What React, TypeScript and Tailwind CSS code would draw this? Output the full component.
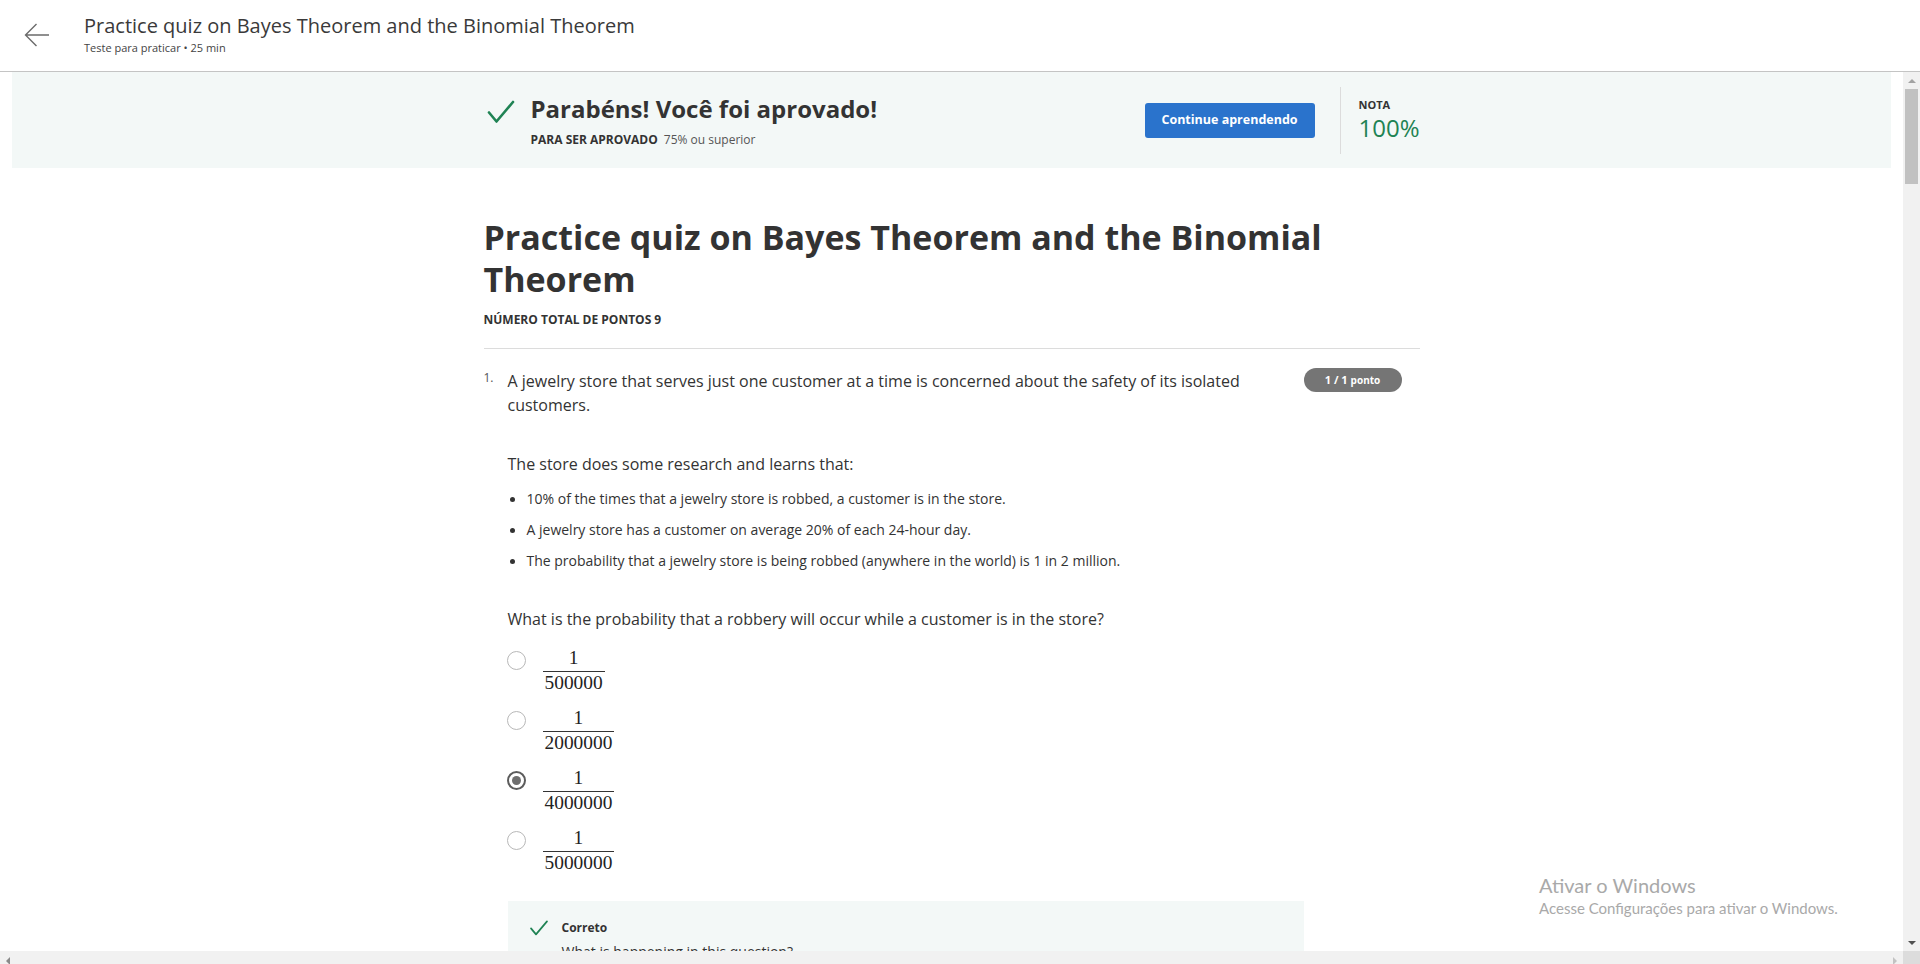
import React from "react";

const options = [
  { den: "500000", checked: false },
  { den: "2000000", checked: false },
  { den: "4000000", checked: true },
  { den: "5000000", checked: false },
];

const facts = [
  "10% of the times that a jewelry store is robbed, a customer is in the store.",
  "A jewelry store has a customer on average 20% of each 24-hour day.",
  "The probability that a jewelry store is being robbed (anywhere in the world) is 1 in 2 million.",
];

function Check({ className }: { className?: string }) {
  return (
    <svg viewBox="0 0 28 24" className={className} fill="none">
      <path d="M2 12.5 L9.5 21.5 L26 2" stroke="#1f8354" strokeWidth="2.6" strokeLinecap="round" strokeLinejoin="round" />
    </svg>
  );
}

function Radio({ checked }: { checked: boolean }) {
  if (checked) {
    return (
      <span className="flex h-[19px] w-[19px] items-center justify-center rounded-full border-2 border-[#5c5c5c]">
        <span className="h-[9px] w-[9px] rounded-full bg-[#6e6e6e]" />
      </span>
    );
  }
  return <span className="block h-[19px] w-[19px] rounded-full border-[1.5px] border-[#b8b8b8]" />;
}

function Fraction({ den }: { den: string }) {
  return (
    <span className="flex flex-col items-center font-['Liberation_Serif',serif] text-[19.4px] text-[#222]">
      <span className="block h-[20px] leading-[20px]">1</span>
      <span className="mt-[3px] block h-px w-full bg-[#333]" />
      <span className="mt-px block h-[20px] px-[2px] leading-[20px]">{den}</span>
    </span>
  );
}

export default function App() {
  return (
    <div className="relative flex h-[964px] w-[1920px] flex-col overflow-hidden bg-white font-['Open_Sans',sans-serif] text-[#333]">
      {/* top bar */}
      <header className="flex h-[72px] shrink-0 items-start border-b border-[#c4c4c4]">
        <div className="w-[84px] pl-[24px] pt-[23px]">
          <svg viewBox="0 0 26 24" className="h-[24px] w-[26px]" fill="none">
            <path d="M25 12 H1.5 M12.5 1 L1.5 12 L12.5 23" stroke="#6b6b6b" strokeWidth="1.4" />
          </svg>
        </div>
        <div className="pt-[12px]">
          <div className="text-[20px] leading-[28px] text-[#3a3a3a]">
            Practice quiz on Bayes Theorem and the Binomial Theorem
          </div>
          <div className="mt-px text-[11px] leading-[14px] text-[#444]">Teste para praticar • 25 min</div>
        </div>
      </header>

      <div className="flex min-h-0 flex-1">
        <main className="min-w-0 flex-1 overflow-hidden">
          {/* result banner */}
          <div className="mx-3 h-[96px] bg-[#f3f8f7]">
            <div className="mx-auto flex h-full max-w-[936px] items-center justify-between">
              <div className="flex items-start pl-[3px]">
                <Check className="mt-[7px] h-[24px] w-[28px]" />
                <div className="ml-[16px]">
                  <h2 className="text-[24px] font-bold leading-[32px] text-[#333]">Parabéns! Você foi aprovado!</h2>
                  <p className="mt-[6px] text-[12px] leading-[17px]">
                    <span className="font-bold">PARA SER APROVADO</span>
                    <span className="ml-[6px] text-[#555]">75% ou superior</span>
                  </p>
                </div>
              </div>
              <div className="flex items-center">
                <button className="h-[35px] w-[170px] rounded-[3px] bg-[#2a73cc] text-[12.5px] font-bold text-white">
                  Continue aprendendo
                </button>
                <div className="ml-[25px] h-[67px] w-px bg-[#dcdcdc]" />
                <div className="ml-[18px] w-[61px]">
                  <div className="text-[11px] font-bold leading-[16px] text-[#333]">NOTA</div>
                  <div className="text-[24px] leading-[30px] text-[#1f8354]">100%</div>
                </div>
              </div>
            </div>
          </div>

          {/* quiz body */}
          <div className="mx-auto max-w-[936px] pt-[48px]">
            <h1 className="text-[34px] font-bold leading-[42px] text-[#333]">
              Practice quiz on Bayes Theorem and the Binomial Theorem
            </h1>
            <p className="mt-[12px] text-[12px] font-bold leading-[16px] text-[#333]">NÚMERO TOTAL DE PONTOS 9</p>
            <hr className="mt-[20px] border-t border-[#dcdcdc]" />

            <div className="mt-[19px] flex items-start">
              <div className="w-[24px] pt-px text-[12px] leading-[18px] text-[#555]">1.</div>
              <div className="w-[796px] pt-px">
                <p className="text-[16px] leading-[24px]">
                  A jewelry store that serves just one customer at a time is concerned about the safety of its isolated
                  customers.
                </p>
                <p className="mt-[35px] text-[16px] leading-[24px]">The store does some research and learns that:</p>
                <ul className="mt-[13px] flex flex-col gap-[11px]">
                  {facts.map((f) => (
                    <li key={f} className="flex items-center text-[14px] leading-[20px]">
                      <span className="ml-[2px] h-[5px] w-[5px] rounded-full bg-[#333]" />
                      <span className="ml-[12px]">{f}</span>
                    </li>
                  ))}
                </ul>
                <p className="mt-[36px] text-[16px] leading-[24px]">
                  What is the probability that a robbery will occur while a customer is in the store?
                </p>
                <div className="mt-[17px] flex flex-col gap-[15px]">
                  {options.map((o) => (
                    <label key={o.den} className="flex items-start">
                      <span className="-ml-px mt-[3px] block">
                        <Radio checked={o.checked} />
                      </span>
                      <span className="ml-[17px] flex">
                        <Fraction den={o.den} />
                      </span>
                    </label>
                  ))}
                </div>

                <div className="mt-[28px] bg-[#f3f8f7] pb-[40px] pl-[20px] pt-[19px]">
                  <div className="flex items-center">
                    <Check className="h-[16px] w-[22px]" />
                    <span className="ml-[12px] text-[12px] font-bold leading-[16px]">Correto</span>
                  </div>
                  <p className="ml-[34px] mt-[6px] text-[14px] leading-[20px]">What is happening in this question?</p>
                </div>
              </div>
              <div className="flex h-[24px] w-[98px] shrink-0 items-center justify-center rounded-full bg-[#757575] text-white">
                <span className="text-[11px] font-bold">1 / 1</span>
                <span className="ml-[3px] text-[10px] font-bold">ponto</span>
              </div>
            </div>
          </div>
        </main>

        {/* vertical scrollbar */}
        <div className="flex w-[17px] shrink-0 flex-col bg-[#f1f1f1]">
          <div className="flex h-[17px] items-center justify-center">
            <svg viewBox="0 0 8 4" className="h-[4px] w-[8px]">
              <path d="M0 4 L4 0 L8 4 Z" fill="#a3a3a3" />
            </svg>
          </div>
          <div className="mx-[2px] h-[95px] bg-[#c1c1c1]" />
          <div className="flex-1" />
          <div className="flex h-[17px] items-center justify-center">
            <svg viewBox="0 0 8 4" className="h-[4px] w-[8px]">
              <path d="M0 0 L8 0 L4 4 Z" fill="#505050" />
            </svg>
          </div>
        </div>
      </div>

      {/* horizontal scrollbar */}
      <div className="flex h-[13px] shrink-0 bg-[#f1f1f1]">
        <div className="w-[17px] pl-[6px] pt-[6px]">
          <svg viewBox="0 0 4 8" className="h-[8px] w-[4px]">
            <path d="M4 0 L0 4 L4 8 Z" fill="#8a8a8a" />
          </svg>
        </div>
        <div className="flex-1" />
        <div className="w-[17px] pl-[7px] pt-[6px]">
          <svg viewBox="0 0 4 8" className="h-[8px] w-[4px]">
            <path d="M0 0 L4 4 L0 8 Z" fill="#c3c3c3" />
          </svg>
        </div>
        <div className="w-[17px] bg-[#dcdcdc]" />
      </div>

      {/* activation watermark */}
      <div className="pointer-events-none absolute left-[1539px] top-[872px] font-['Lato',sans-serif] text-[#a9a9a9]">
        <div className="text-[20px] leading-[26px]">Ativar o Windows</div>
        <div className="text-[15px] leading-[20px]">Acesse Configurações para ativar o Windows.</div>
      </div>
    </div>
  );
}
